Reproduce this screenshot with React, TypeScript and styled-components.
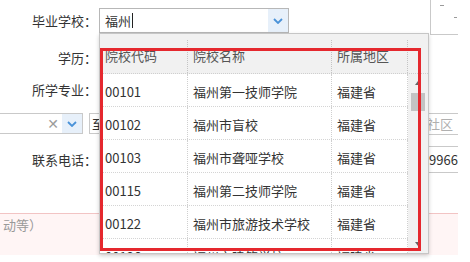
import React from "react";
import styled, { createGlobalStyle } from "styled-components";

const GlobalStyle = createGlobalStyle`
  html, body { margin: 0; padding: 0; background: #fff; }
  body {
    font-family: "Noto Sans CJK SC", "Noto Sans", sans-serif;
    font-size: 13px;
    color: #333;
  }
`;

const Page = styled.div`
  position: relative;
  width: 458px;
  height: 262px;
  overflow: hidden;
  background: #fff;
`;

const Form = styled.div`
  display: flex;
  flex-direction: column;
`;

const Row = styled.div<{ $h: number; $mt: number; $align?: string }>`
  display: flex;
  align-items: ${(p) => p.$align || "center"};
  height: ${(p) => p.$h}px;
  margin-top: ${(p) => p.$mt}px;
  flex-shrink: 0;
`;

const Label = styled.div<{ $lh: number; $mt?: number }>`
  width: 97px;
  margin-right: 2px;
  margin-top: ${(p) => p.$mt || 0}px;
  flex-shrink: 0;
  text-align: right;
  white-space: nowrap;
  line-height: ${(p) => p.$lh}px;
  color: #333;
`;

const SchoolField = styled.div`
  position: relative;
  margin-top: 8px;
  width: 190px;
  height: 25px;
  flex-shrink: 0;
`;

const SchoolInput = styled.div`
  box-sizing: border-box;
  height: 25px;
  border: 1px solid #b7b7b7;
  display: flex;
  background: #fff;
`;

const InputText = styled.div`
  flex: 1;
  display: flex;
  align-items: center;
  padding-left: 5px;
  color: #333;
`;

const Caret = styled.span`
  display: inline-block;
  width: 1px;
  height: 15px;
  background: #222;
  margin-left: 1px;
`;

const ArrowButton = styled.div`
  width: 20px;
  flex-shrink: 0;
  background: #e7f0fa;
  display: flex;
  align-items: center;
  justify-content: center;
`;

const Chevron = () => (
  <svg width="10" height="6" viewBox="0 0 10 6">
    <path d="M1 1 L5 5 L9 1" fill="none" stroke="#4a92d8" strokeWidth="1.8" />
  </svg>
);

const Photo = styled.div`
  position: relative;
  box-sizing: border-box;
  width: 30px;
  height: 36px;
  margin-top: -1px;
  margin-left: auto;
  margin-right: -2px;
  border: 1px solid #c9c9c9;
  background: #fff;
  flex-shrink: 0;
`;

const PhotoMark = styled.span<{ $x: number; $y: number; $w: number }>`
  position: absolute;
  left: ${(p) => p.$x}px;
  top: ${(p) => p.$y}px;
  width: ${(p) => p.$w}px;
  height: 1px;
  background: #9a9a9a;
`;

const Dropdown = styled.div`
  position: absolute;
  top: 100%;
  left: 0;
  box-sizing: border-box;
  width: 330px;
  height: 221px;
  border: 1px solid #c6c6c6;
  background: #fff;
  box-shadow: 0 2px 4px rgba(0, 0, 0, 0.18);
  overflow: hidden;
  z-index: 5;
  display: flex;
  flex-direction: column;
`;

const Header = styled.div`
  box-sizing: border-box;
  display: flex;
  height: 40px;
  padding-top: 6px;
  background: #f1f1f1;
  color: #555;
  flex-shrink: 0;
  border-bottom: 1px dotted #cfcfcf;
`;

const HeadCell = styled.div<{ $w: number }>`
  box-sizing: border-box;
  width: ${(p) => p.$w}px;
  padding-left: 5px;
  line-height: 31px;
  border-right: 1px dotted #c4c4c4;
  white-space: nowrap;
  flex-shrink: 0;
`;

const Body = styled.div`
  display: flex;
  flex: 1;
  min-height: 0;
`;

const Rows = styled.div`
  width: 308px;
  overflow: hidden;
  flex-shrink: 0;
`;

const DataRow = styled.div`
  box-sizing: border-box;
  display: flex;
  height: 33px;
  border-bottom: 1px dotted #d4d4d4;
  background: #fff;
`;

const Cell = styled.div<{ $w: number }>`
  box-sizing: border-box;
  width: ${(p) => p.$w}px;
  padding: 4px 0 0 5px;
  line-height: 28px;
  border-right: 1px dotted #cfcfcf;
  white-space: nowrap;
  overflow: hidden;
  flex-shrink: 0;
  color: #333;
`;

const Scrollbar = styled.div`
  width: 20px;
  background: #f1f1f1;
  display: flex;
  flex-direction: column;
  align-items: center;
`;

const ScrollArrow = styled.div<{ $down?: boolean }>`
  height: 18px;
  flex-shrink: 0;
  display: flex;
  align-items: center;
  justify-content: center;
  &::before {
    content: "";
    display: block;
    border-left: 3px solid transparent;
    border-right: 3px solid transparent;
    ${(p) =>
      p.$down
        ? "border-top: 4px solid #666;"
        : "border-bottom: 4px solid #666;"}
  }
`;

const Thumb = styled.div`
  width: 14px;
  height: 18px;
  margin-top: 1px;
  background: #c3c3c3;
  flex-shrink: 0;
`;

const Spacer = styled.div`
  flex: 1;
`;

const LeftCombo = styled.div`
  box-sizing: border-box;
  width: 83px;
  height: 21px;
  border: 1px solid #c9c9c9;
  border-left: none;
  display: flex;
  justify-content: flex-end;
  background: #fff;
  flex-shrink: 0;
`;

const Clear = styled.span`
  align-self: center;
  margin-right: 3px;
  color: #9c9c9c;
  font-size: 14px;
  font-weight: bold;
  font-family: "DejaVu Sans", sans-serif;
`;

const Box = styled.div<{ $w: number; $h: number; $ml: number; $muted?: boolean; $pl?: number }>`
  box-sizing: border-box;
  width: ${(p) => p.$w}px;
  height: ${(p) => p.$h}px;
  margin-left: ${(p) => p.$ml}px;
  padding-left: ${(p) => (p.$pl ?? 6)}px;
  border: 1px solid #c9c9c9;
  display: flex;
  align-items: center;
  white-space: nowrap;
  overflow: hidden;
  background: #fff;
  color: ${(p) => (p.$muted ? "#b0b0b0" : "#333")};
  flex-shrink: 0;
`;

const Note = styled.div`
  margin-top: 40px;
  height: 41px;
  border-top: 1px solid #f2c4c4;
  background: #fff5f5;
  padding-left: 3px;
  line-height: 22px;
  color: #999;
`;

const Annotation = styled.div`
  position: absolute;
  left: 100px;
  top: 48px;
  width: 321px;
  height: 203px;
  box-sizing: border-box;
  border: 3px solid #e5282e;
  z-index: 10;
  pointer-events: none;
`;

const cols = [88, 144, 76];

const schools = [
  ["00101", "福州第一技师学院", "福建省"],
  ["00102", "福州市盲校", "福建省"],
  ["00103", "福州市聋哑学校", "福建省"],
  ["00115", "福州第二技师学院", "福建省"],
  ["00122", "福州市旅游技术学校", "福建省"],
  ["00126", "福州市建筑学校", "福建省"],
];

export default function App() {
  return (
    <Page>
      <GlobalStyle />
      <Form>
        <Row $h={35} $mt={0} $align="flex-start">
          <Label $lh={25} $mt={8}>毕业学校：</Label>
          <SchoolField>
            <SchoolInput>
              <InputText>
                福州
                <Caret />
              </InputText>
              <ArrowButton>
                <Chevron />
              </ArrowButton>
            </SchoolInput>
            <Dropdown>
              <Header>
                <HeadCell $w={cols[0]}>院校代码</HeadCell>
                <HeadCell $w={cols[1]}>院校名称</HeadCell>
                <HeadCell $w={cols[2]}>所属地区</HeadCell>
              </Header>
              <Body>
                <Rows>
                  {schools.map((s) => (
                    <DataRow key={s[0]}>
                      {s.map((v, i) => (
                        <Cell key={i} $w={cols[i]}>
                          {v}
                        </Cell>
                      ))}
                    </DataRow>
                  ))}
                </Rows>
                <Scrollbar>
                  <ScrollArrow />
                  <Thumb />
                  <Spacer />
                  <ScrollArrow $down />
                </Scrollbar>
              </Body>
            </Dropdown>
          </SchoolField>
          <Photo>
            <PhotoMark $x={9} $y={5} $w={4} />
            <PhotoMark $x={23} $y={17} $w={3} />
          </Photo>
        </Row>
        <Row $h={26} $mt={10}>
          <Label $lh={26}>学历：</Label>
        </Row>
        <Row $h={26} $mt={6}>
          <Label $lh={26}>所学专业：</Label>
        </Row>
        <Row $h={21} $mt={10}>
          <LeftCombo>
            <Clear>✕</Clear>
            <ArrowButton>
              <Chevron />
            </ArrowButton>
          </LeftCombo>
          <Box $w={325} $h={21} $ml={6} $pl={2}>
            至
          </Box>
          <Box $w={60} $h={22} $ml={6} $muted>
            社区
          </Box>
        </Row>
        <Row $h={27} $mt={12}>
          <Label $lh={24}>联系电话：</Label>
          <Box $w={317} $h={27} $ml={0}></Box>
          <Box $w={60} $h={27} $ml={6}>
            99667788
          </Box>
        </Row>
        <Note>动等）</Note>
      </Form>
      <Annotation />
    </Page>
  );
}
